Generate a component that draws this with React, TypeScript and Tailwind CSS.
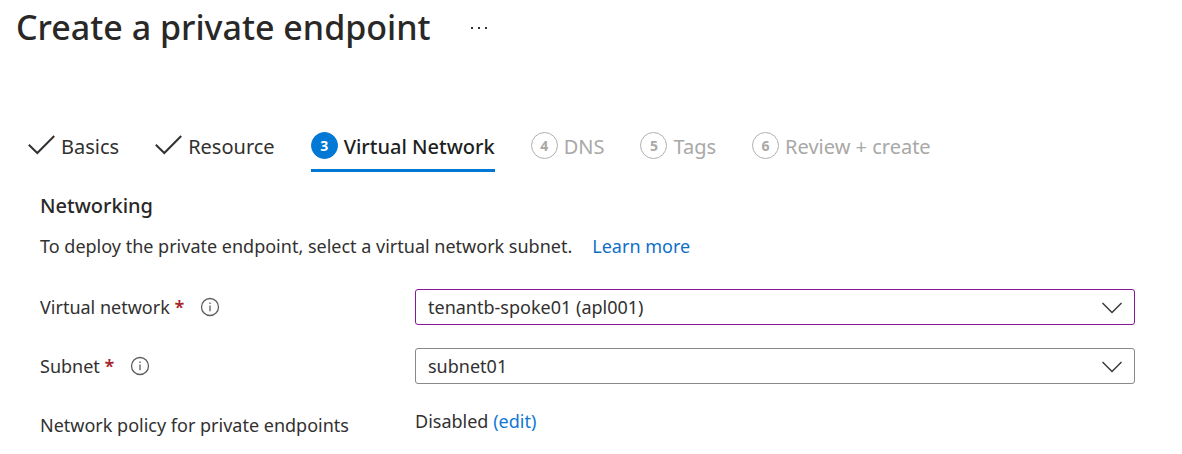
import type { ReactNode } from "react";

function DoneStep({ children }: { children: ReactNode }) {
  return (
    <a href="#" className="flex h-10 items-start gap-1.5 border-b-3 border-transparent">
      <svg width="27" height="20" viewBox="0 0 27 20" fill="none" stroke="#323130" strokeWidth="2" aria-hidden="true" className="mt-[3px] shrink-0">
        <path d="M.8 9.8 9.3 18 26.2 1" />
      </svg>
      {children}
    </a>
  );
}

function Step({ n, current, children }: { n: number; current?: boolean; children: ReactNode }) {
  return (
    <a
      href="#"
      aria-current={current ? "step" : undefined}
      className={`flex h-10 items-start gap-1.5 border-b-3 ${current ? "border-[#0078d4] font-medium text-[#201f1e]" : "border-transparent text-[#a9a8a7]"}`}
    >
      <span
        className={`flex size-[27px] shrink-0 items-center justify-center rounded-full border text-[14px] leading-none font-bold ${current ? "border-[#0078d4] bg-[#0078d4] text-white" : "border-[#b0afae]"}`}
      >
        {n}
      </span>
      {children}
    </a>
  );
}

function Dropdown({ id, value, active }: { id: string; value: string; active?: boolean }) {
  return (
    <div className="grid w-full items-center">
      <select
        id={id}
        className={`col-start-1 row-start-1 h-9 w-full appearance-none rounded-[3px] border bg-white pr-12 pl-3 outline-none ${active ? "border-[#881798]" : "border-[#8a8886]"}`}
      >
        <option>{value}</option>
      </select>
      <svg width="20" height="12" viewBox="0 0 20 12" fill="none" stroke="#3b3a39" strokeWidth="1.5" aria-hidden="true" className="pointer-events-none col-start-1 row-start-1 mt-0.5 mr-[13px] justify-self-end">
        <path d="m.5 1 9.5 9.5L19.5 1" />
      </svg>
    </div>
  );
}

function Field({ id, label, value, active }: { id: string; label: string; value: string; active?: boolean }) {
  return (
    <>
      <div className="flex items-center">
        <label htmlFor={id}>
          {label} <span className="font-semibold text-[#a4262c]">*</span>
        </label>
        <button type="button" aria-label={`About ${label}`} className="ml-4 shrink-0">
          <svg width="20" height="20" viewBox="0 0 20 20" fill="none" stroke="#605e5c" strokeWidth="1.3" className="block">
            <circle cx="10" cy="10" r="8.5" />
            <path d="M10 8.4v5.8M10 5.5v1.6" />
          </svg>
        </button>
      </div>
      <Dropdown id={id} value={value} active={active} />
    </>
  );
}

export default function App() {
  return (
    <main className="bg-white pb-4 font-['Noto_Sans',sans-serif] text-[18px] leading-7 text-[#323130]">
      <header className="flex items-center gap-10 px-4 pt-[3px]">
        <h1 className="text-[34px] leading-12 font-medium text-[#292827]">Create a private endpoint</h1>
        <button type="button" aria-label="More actions" className="mt-0.5 text-[#323130]">
          <svg width="17" height="4" viewBox="0 0 17 4" fill="currentColor" className="block">
            <path d="M0 1h2v2H0zM7 1h2v2H7zM14 1h2v2h-2z" />
          </svg>
        </button>
      </header>
      <nav aria-label="Steps" className="mt-[81px] flex flex-wrap gap-x-9 px-7 text-[20px] leading-[30px]">
        <DoneStep>Basics</DoneStep>
        <DoneStep>Resource</DoneStep>
        <Step n={3} current>Virtual Network</Step>
        <Step n={4}>DNS</Step>
        <Step n={5}>Tags</Step>
        <Step n={6}>Review + create</Step>
      </nav>
      <section className="pt-5 pr-[47px] pl-10">
        <h2 className="text-[20px] font-medium text-[#292827]">Networking</h2>
        <p className="mt-3">
          To deploy the private endpoint, select a virtual network subnet.
          <a href="#" className="ml-5 text-[#0f6fc6]">Learn more</a>
        </p>
        <div className="mt-[29px] grid grid-cols-[375px_1fr] items-center gap-y-[23px]">
          <Field id="vnet" label="Virtual network" value="tenantb-spoke01 (apl001)" active />
          <Field id="subnet" label="Subnet" value="subnet01" />
          <span>Network policy for private endpoints</span>
          <span className="pb-2">
            Disabled <a href="#" className="text-[#0f78d4]">(edit)</a>
          </span>
        </div>
      </section>
    </main>
  );
}
